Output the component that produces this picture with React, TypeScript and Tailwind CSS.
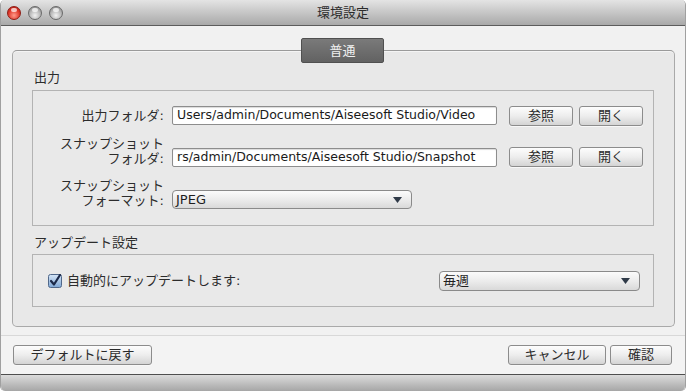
import React from 'react';

const font = { fontFamily: '"DejaVu Sans", "Noto Sans CJK JP", sans-serif' };

function Btn({ label, className = '' }: { label: string; className?: string }) {
  return (
    <div
      className={`h-[20px] flex items-center justify-center rounded-[3px] border border-[#8c8c8c] bg-gradient-to-b from-[#fdfdfd] via-[#ededed] to-[#d4d4d4] text-[13px] text-[#2a2a2a] shadow-[0_1px_0_#f8f8f8] ${className}`}
    >
      {label}
    </div>
  );
}

function Select({ value, className = '' }: { value: string; className?: string }) {
  return (
    <div
      className={`flex items-center justify-between rounded-[4px] border border-[#8a8a8a] bg-gradient-to-b from-[#fbfbfb] via-[#ececec] to-[#d9d9d9] pl-[3px] pr-[9px] text-[13px] text-[#1e1e1e] ${className}`}
    >
      <span>{value}</span>
      <svg width="9" height="6" viewBox="0 0 9 6">
        <path d="M0 0 L9 0 L4.5 6 Z" fill="#2f3a48" />
      </svg>
    </div>
  );
}

function Field({ value }: { value: string }) {
  return (
    <div className="w-[325px] h-[19px] flex items-center overflow-hidden whitespace-nowrap rounded-[2px] border border-[#8d8d8d] bg-white pl-[4px] text-[12.5px] text-[#1a1a1a] shadow-[inset_0_1px_1px_rgba(0,0,0,0.15)]">
      {value}
    </div>
  );
}

function Light({ red }: { red?: boolean }) {
  return (
    <div
      className={`w-[14px] h-[14px] rounded-full border ${
        red
          ? 'border-[#8e1c14] bg-[radial-gradient(circle_at_50%_70%,#ff9a8a_0%,#e0392b_55%,#a8180f_100%)]'
          : 'border-[#6a6a6a] bg-[radial-gradient(circle_at_50%_70%,#f2f2f2_0%,#b4b4b4_55%,#7c7c7c_100%)]'
      } relative`}
    >
      <div className="absolute left-[3px] top-[1px] w-[6px] h-[4px] rounded-full bg-white/70" />
    </div>
  );
}

export default function App() {
  return (
    <div
      style={font}
      className="w-[686px] h-[391px] flex flex-col overflow-hidden rounded-t-[5px] rounded-b-[5px] border-x border-[#a0a0a0] bg-[#f1f1f1] text-[13px] text-[#2c2c2c]"
    >
      {/* title bar */}
      <div className="relative h-[26px] shrink-0 flex items-center border-b border-[#5c5c5c] bg-gradient-to-b from-[#e4e4e4] to-[#a9a9a9] px-[6px]">
        <div className="flex gap-[7px]">
          <Light red />
          <Light />
          <Light />
        </div>
        <div className="absolute inset-0 flex items-center justify-center text-[13px] text-[#2b2b2b]">環境設定</div>
      </div>

      {/* body */}
      <div className="flex-1 flex flex-col">
        <div className="pt-[24px] pl-[11px] pr-[10px]">
          <div className="relative h-[277px] rounded-[5px] border border-[#a9a9a9] border-t-[#9a9a9a] bg-[#e8e8e8] pt-[18px] pl-[19px] pr-[20px] shadow-[inset_0_1px_0_#f4f4f4]">
            {/* tab */}
            <div className="absolute left-[288px] top-[-13px] w-[83px] h-[25px] flex items-center justify-center rounded-[2px] border border-[#505050] bg-gradient-to-b from-[#7a7a7a] to-[#626262] text-[13px] text-[#f0f0f0]">
              普通
            </div>

            <div className="pl-[2px] leading-[17px]">出力</div>
            <div className="mt-[4px] h-[136px] border border-[#b3b3b3] bg-[#e9e9e9] pt-[14px] flex flex-col gap-[8px]">
              <div className="h-[21px] flex items-center">
                <div className="w-[139px] pr-[8px] text-right">出力フォルダ:</div>
                <Field value="Users/admin/Documents/Aiseesoft Studio/Video" />
                <Btn label="参照" className="ml-[12px] w-[64px]" />
                <Btn label="開く" className="ml-[6px] w-[64px]" />
              </div>
              <div className="h-[34px] flex items-end">
                <div className="w-[139px] pr-[8px] pb-[2px] text-right leading-[15px]">
                  スナップショット
                  <br />
                  フォルダ:
                </div>
                <div className="flex items-center pb-[1px]">
                  <Field value="rs/admin/Documents/Aiseesoft Studio/Snapshot" />
                  <Btn label="参照" className="ml-[12px] w-[64px]" />
                  <Btn label="開く" className="ml-[6px] w-[64px]" />
                </div>
              </div>
              <div className="h-[34px] flex items-end">
                <div className="w-[139px] pr-[8px] pb-[2px] text-right leading-[15px]">
                  スナップショット
                  <br />
                  フォーマット:
                </div>
                <Select value="JPEG" className="w-[240px] h-[19px] mb-[1px]" />
              </div>
            </div>

            <div className="mt-[8px] pl-[2px] leading-[17px]">アップデート設定</div>
            <div className="mt-[3px] h-[53px] border border-[#b3b3b3] bg-[#e9e9e9] pl-[15px] pr-[13px] flex items-center justify-between">
              <div className="flex items-center gap-[5px]">
                <svg width="14" height="14" viewBox="0 0 14 14">
                  <defs>
                    <linearGradient id="cb" x1="0" y1="0" x2="0" y2="1">
                      <stop offset="0" stopColor="#d6e6f7" />
                      <stop offset="1" stopColor="#7fa7d6" />
                    </linearGradient>
                  </defs>
                  <rect x="0.5" y="0.5" width="13" height="13" rx="2" fill="url(#cb)" stroke="#50688a" />
                  <path d="M3 7 L6 10.5 L12 1" fill="none" stroke="#1c2a4a" strokeWidth="2.2" strokeLinecap="round" strokeLinejoin="round" />
                </svg>
                <span>自動的にアップデートします:</span>
              </div>
              <Select value="毎週" className="w-[201px] h-[20px]" />
            </div>
          </div>
        </div>

        {/* footer */}
        <div className="mt-[8px] flex-1 flex flex-col border-t border-[#d8d8d8] bg-[#f3f3f3]">
          <div className="flex items-center justify-between pt-[9px] pl-[12px] pr-[13px]">
            <Btn label="デフォルトに戻す" className="w-[139px]" />
            <div className="flex gap-[4px]">
              <Btn label="キャンセル" className="w-[98px]" />
              <Btn label="確認" className="w-[62px]" />
            </div>
          </div>
          <div className="mt-auto h-[17px] border-t border-[#4e4e4e] bg-gradient-to-b from-[#dcdcdc] to-[#a6a6a6]" />
        </div>
      </div>
    </div>
  );
}
